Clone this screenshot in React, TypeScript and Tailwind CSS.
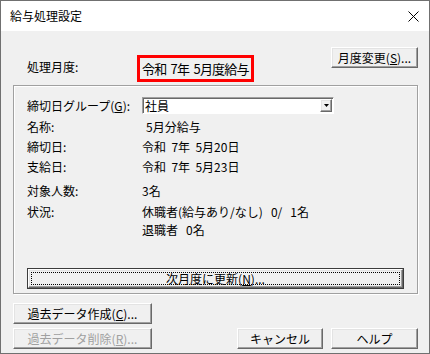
import React from "react"

const btn3d =
  "border border-t-white border-l-white border-r-[#696969] border-b-[#696969] bg-[#f0f0f0] shadow-[inset_-1px_-1px_0_#a0a0a0,inset_1px_1px_0_#e3e3e3]"

type BtnProps = {
  children: React.ReactNode
  className?: string
  disabled?: boolean
}

const WinButton: React.FC<BtnProps> = ({ children, className = "", disabled }) => (
  <button
    type="button"
    className={`${btn3d} flex items-center justify-center whitespace-nowrap text-[12px] leading-none ${
      disabled ? "text-[#a0a0a0]" : "text-black"
    } ${className}`}
  >
    {children}
  </button>
)

const Key: React.FC<{ k: string }> = ({ k }) => (
  <span className="underline underline-offset-[1px]">{k}</span>
)

const Row: React.FC<{ label: React.ReactNode; children: React.ReactNode; className?: string }> = ({
  label,
  children,
  className = "",
}) => (
  <div className={`flex h-[20px] items-center whitespace-pre ${className}`}>
    <div className="w-[115px]">{label}</div>
    <div>{children}</div>
  </div>
)

export default function App() {
  return (
    <div className="flex h-[354px] w-[430px] flex-col border border-[#707070] bg-[#f0f0f0] font-['Noto_Sans_CJK_JP','Noto_Sans',sans-serif] text-[12px] text-black">
      {/* title bar */}
      <div className="flex h-[30px] items-center bg-white pl-[9px]">
        <span className="text-[12px]">給与処理設定</span>
        <svg className="ml-auto mr-[10px]" width="11" height="11" viewBox="0 0 11 11">
          <path d="M0.5 0.5 L10.5 10.5 M10.5 0.5 L0.5 10.5" stroke="#000" strokeWidth="1" />
        </svg>
      </div>

      <div className="flex flex-1 flex-col pl-[12px]">
        {/* 処理月度 */}
        <div className="flex h-[54px] items-start">
          <div className="mt-[28px] w-[124px] pl-[14px] leading-[16px]">処理月度:</div>
          <div className="mt-[24px] flex h-[27px] w-[117px] items-center overflow-hidden whitespace-pre border-[3px] border-[#ff0000] pl-[2px] text-[13px] tracking-[-0.8px]">
            令和  7年  5月度給与
          </div>
          <WinButton className="ml-[77px] mt-[16px] h-[21px] w-[87px]">
            月度変更(<Key k="S" />)...
          </WinButton>
        </div>

        {/* group box */}
        <div className="flex h-[209px] w-[405px] flex-col border border-[#a0a0a0] pl-[13px] pt-[11px] pb-[4px] shadow-[inset_1px_1px_0_#fff,1px_1px_0_#fff]">
          <div className="flex h-[17px] items-center">
            <div className="w-[115px]">
              締切日グループ(<Key k="G" />):
            </div>
            <div className="flex h-[17px] w-[192px] items-center border border-t-[#a0a0a0] border-l-[#a0a0a0] border-r-white border-b-white bg-white shadow-[inset_1px_1px_0_#696969]">
              <span className="pl-[2px]">社員</span>
              <div className={`${btn3d} ml-auto mr-[1px] flex h-[13px] w-[12px] items-center justify-center`}>
                <svg width="5" height="3" viewBox="0 0 5 3">
                  <path d="M0 0 H5 L2.5 3 Z" fill="#000" />
                </svg>
              </div>
            </div>
          </div>
          <Row label="名称:" className="mt-[3px]">
            <span className="pl-[4px]">5月分給与</span>
          </Row>
          <Row label="締切日:">令和  7年  5月20日</Row>
          <Row label="支給日:">令和  7年  5月23日</Row>
          <Row label="対象人数:" className="mt-[4px]">
            3名
          </Row>
          <div className="mt-[2px] flex whitespace-pre leading-[18px]">
            <div className="w-[115px]">状況:</div>
            <div className="flex flex-col">
              <span>休職者(給与あり/なし)   0/   1名</span>
              <span>退職者   0名</span>
            </div>
          </div>

          {/* default button */}
          <button
            type="button"
            className="mt-auto flex h-[21px] w-[377px] border border-[#3c3c3c] bg-[#f0f0f0] p-0"
          >
            <div className={`${btn3d} flex h-full w-full p-[2px]`}>
              <div className="flex h-full w-full items-center justify-center border border-dotted border-black text-[12px] leading-none">
                次月度に更新(<Key k="N" />)...
              </div>
            </div>
          </button>
        </div>

        {/* bottom buttons */}
        <WinButton className="mt-[9px] h-[21px] w-[139px]">
          過去データ作成(<Key k="C" />)...
        </WinButton>
        <div className="mt-[4px] flex">
          <WinButton disabled className="h-[21px] w-[139px]">
            過去データ削除(<Key k="R" />)...
          </WinButton>
          <WinButton className="ml-[85px] h-[21px] w-[86px]">キャンセル</WinButton>
          <WinButton className="ml-[8px] h-[21px] w-[87px]">ヘルプ</WinButton>
        </div>
      </div>
    </div>
  )
}
